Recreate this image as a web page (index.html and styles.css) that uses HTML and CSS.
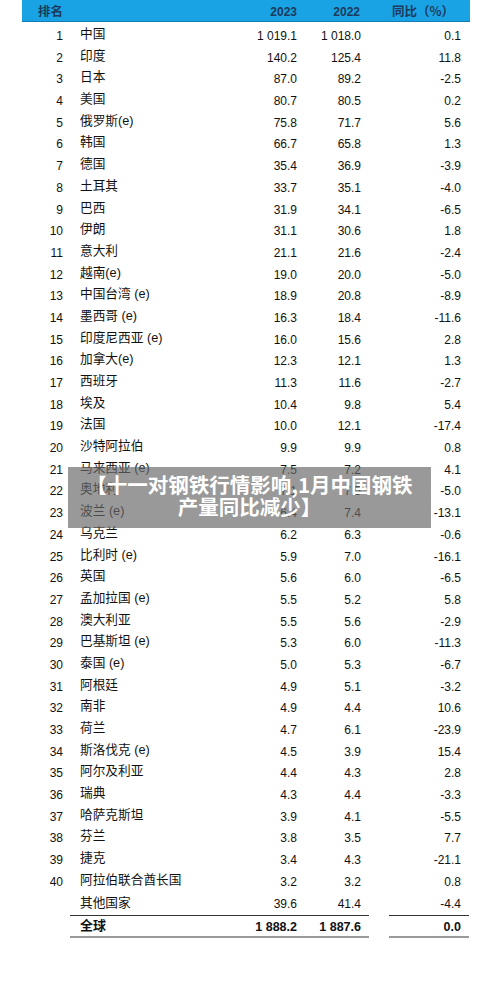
FILE: index.html
```html
<!DOCTYPE html>
<html lang="zh-CN">
<head>
<meta charset="utf-8">
<title>全球粗钢产量</title>
<link rel="stylesheet" href="styles.css">
</head>
<body>
<div class="page">
  <div class="head">
    <div class="h-rank">排名</div>
    <div></div>
    <div class="h-num">2023</div>
    <div class="h-num h-2022">2022</div>
    <div></div>
    <div class="h-pct">同比（%）</div>
  </div>
  <div class="rows">
    <div class="row"><div class="rank">1</div><div class="name">中国</div><div class="v23">1 019.1</div><div class="v22">1 018.0</div><div></div><div class="pct">0.1</div></div>
    <div class="row"><div class="rank">2</div><div class="name">印度</div><div class="v23">140.2</div><div class="v22">125.4</div><div></div><div class="pct">11.8</div></div>
    <div class="row"><div class="rank">3</div><div class="name">日本</div><div class="v23">87.0</div><div class="v22">89.2</div><div></div><div class="pct">-2.5</div></div>
    <div class="row"><div class="rank">4</div><div class="name">美国</div><div class="v23">80.7</div><div class="v22">80.5</div><div></div><div class="pct">0.2</div></div>
    <div class="row"><div class="rank">5</div><div class="name">俄罗斯(e)</div><div class="v23">75.8</div><div class="v22">71.7</div><div></div><div class="pct">5.6</div></div>
    <div class="row"><div class="rank">6</div><div class="name">韩国</div><div class="v23">66.7</div><div class="v22">65.8</div><div></div><div class="pct">1.3</div></div>
    <div class="row"><div class="rank">7</div><div class="name">德国</div><div class="v23">35.4</div><div class="v22">36.9</div><div></div><div class="pct">-3.9</div></div>
    <div class="row"><div class="rank">8</div><div class="name">土耳其</div><div class="v23">33.7</div><div class="v22">35.1</div><div></div><div class="pct">-4.0</div></div>
    <div class="row"><div class="rank">9</div><div class="name">巴西</div><div class="v23">31.9</div><div class="v22">34.1</div><div></div><div class="pct">-6.5</div></div>
    <div class="row"><div class="rank">10</div><div class="name">伊朗</div><div class="v23">31.1</div><div class="v22">30.6</div><div></div><div class="pct">1.8</div></div>
    <div class="row"><div class="rank">11</div><div class="name">意大利</div><div class="v23">21.1</div><div class="v22">21.6</div><div></div><div class="pct">-2.4</div></div>
    <div class="row"><div class="rank">12</div><div class="name">越南(e)</div><div class="v23">19.0</div><div class="v22">20.0</div><div></div><div class="pct">-5.0</div></div>
    <div class="row"><div class="rank">13</div><div class="name">中国台湾 (e)</div><div class="v23">18.9</div><div class="v22">20.8</div><div></div><div class="pct">-8.9</div></div>
    <div class="row"><div class="rank">14</div><div class="name">墨西哥 (e)</div><div class="v23">16.3</div><div class="v22">18.4</div><div></div><div class="pct">-11.6</div></div>
    <div class="row"><div class="rank">15</div><div class="name">印度尼西亚 (e)</div><div class="v23">16.0</div><div class="v22">15.6</div><div></div><div class="pct">2.8</div></div>
    <div class="row"><div class="rank">16</div><div class="name">加拿大(e)</div><div class="v23">12.3</div><div class="v22">12.1</div><div></div><div class="pct">1.3</div></div>
    <div class="row"><div class="rank">17</div><div class="name">西班牙</div><div class="v23">11.3</div><div class="v22">11.6</div><div></div><div class="pct">-2.7</div></div>
    <div class="row"><div class="rank">18</div><div class="name">埃及</div><div class="v23">10.4</div><div class="v22">9.8</div><div></div><div class="pct">5.4</div></div>
    <div class="row"><div class="rank">19</div><div class="name">法国</div><div class="v23">10.0</div><div class="v22">12.1</div><div></div><div class="pct">-17.4</div></div>
    <div class="row"><div class="rank">20</div><div class="name">沙特阿拉伯</div><div class="v23">9.9</div><div class="v22">9.9</div><div></div><div class="pct">0.8</div></div>
    <div class="row"><div class="rank">21</div><div class="name">马来西亚 (e)</div><div class="v23">7.5</div><div class="v22">7.2</div><div></div><div class="pct">4.1</div></div>
    <div class="row"><div class="rank">22</div><div class="name">奥地利</div><div class="v23">7.1</div><div class="v22">7.5</div><div></div><div class="pct">-5.0</div></div>
    <div class="row"><div class="rank">23</div><div class="name">波兰 (e)</div><div class="v23">6.4</div><div class="v22">7.4</div><div></div><div class="pct">-13.1</div></div>
    <div class="row"><div class="rank">24</div><div class="name">乌克兰</div><div class="v23">6.2</div><div class="v22">6.3</div><div></div><div class="pct">-0.6</div></div>
    <div class="row"><div class="rank">25</div><div class="name">比利时 (e)</div><div class="v23">5.9</div><div class="v22">7.0</div><div></div><div class="pct">-16.1</div></div>
    <div class="row"><div class="rank">26</div><div class="name">英国</div><div class="v23">5.6</div><div class="v22">6.0</div><div></div><div class="pct">-6.5</div></div>
    <div class="row"><div class="rank">27</div><div class="name">孟加拉国 (e)</div><div class="v23">5.5</div><div class="v22">5.2</div><div></div><div class="pct">5.8</div></div>
    <div class="row"><div class="rank">28</div><div class="name">澳大利亚</div><div class="v23">5.5</div><div class="v22">5.6</div><div></div><div class="pct">-2.9</div></div>
    <div class="row"><div class="rank">29</div><div class="name">巴基斯坦 (e)</div><div class="v23">5.3</div><div class="v22">6.0</div><div></div><div class="pct">-11.3</div></div>
    <div class="row"><div class="rank">30</div><div class="name">泰国 (e)</div><div class="v23">5.0</div><div class="v22">5.3</div><div></div><div class="pct">-6.7</div></div>
    <div class="row"><div class="rank">31</div><div class="name">阿根廷</div><div class="v23">4.9</div><div class="v22">5.1</div><div></div><div class="pct">-3.2</div></div>
    <div class="row"><div class="rank">32</div><div class="name">南非</div><div class="v23">4.9</div><div class="v22">4.4</div><div></div><div class="pct">10.6</div></div>
    <div class="row"><div class="rank">33</div><div class="name">荷兰</div><div class="v23">4.7</div><div class="v22">6.1</div><div></div><div class="pct">-23.9</div></div>
    <div class="row"><div class="rank">34</div><div class="name">斯洛伐克 (e)</div><div class="v23">4.5</div><div class="v22">3.9</div><div></div><div class="pct">15.4</div></div>
    <div class="row"><div class="rank">35</div><div class="name">阿尔及利亚</div><div class="v23">4.4</div><div class="v22">4.3</div><div></div><div class="pct">2.8</div></div>
    <div class="row"><div class="rank">36</div><div class="name">瑞典</div><div class="v23">4.3</div><div class="v22">4.4</div><div></div><div class="pct">-3.3</div></div>
    <div class="row"><div class="rank">37</div><div class="name">哈萨克斯坦</div><div class="v23">3.9</div><div class="v22">4.1</div><div></div><div class="pct">-5.5</div></div>
    <div class="row"><div class="rank">38</div><div class="name">芬兰</div><div class="v23">3.8</div><div class="v22">3.5</div><div></div><div class="pct">7.7</div></div>
    <div class="row"><div class="rank">39</div><div class="name">捷克</div><div class="v23">3.4</div><div class="v22">4.3</div><div></div><div class="pct">-21.1</div></div>
    <div class="row"><div class="rank">40</div><div class="name">阿拉伯联合酋长国</div><div class="v23">3.2</div><div class="v22">3.2</div><div></div><div class="pct">0.8</div></div>
    <div class="row row-other"><div class="rank"></div><div class="name">其他国家</div><div class="v23">39.6</div><div class="v22">41.4</div><div class="gap"></div><div class="pct">-4.4</div></div>
    <div class="row row-total"><div class="rank"></div><div class="name">全球</div><div class="v23">1 888.2</div><div class="v22">1 887.6</div><div class="gap"></div><div class="pct">0.0</div></div>
  </div>
  <div class="caption">【十一对钢铁行情影响,1月中国钢铁<br>产量同比减少】</div>
</div>
</body>
</html>
```

FILE: styles.css
```css
html, body {
  margin: 0;
  padding: 0;
  background: #ffffff;
}

.page {
  position: relative;
  width: 500px;
  height: 996px;
  font-family: "Liberation Sans", "Noto Sans CJK SC", sans-serif;
  font-size: 12px;
  color: #111111;
}

.head {
  display: grid;
  grid-template-columns: 48px 170px 65px 64px 20px 81px;
  margin-left: 22px;
  width: 448px;
  height: 21px;
  background: #19a3e4;
  border-bottom: 1px solid #137bb3;
  font-weight: bold;
  color: #1d3a5c;
  line-height: 21px;
}

.head > div {
  padding-top: 2px;
}

.h-rank {
  padding-left: 16px;
  white-space: nowrap;
  font-family: "Noto Sans CJK SC", sans-serif;
  font-size: 12.5px;
  line-height: 17px;
}

.h-num {
  text-align: right;
  padding-right: 8px;
}

.h-2022 {
  padding-right: 9px;
}

.h-pct {
  text-align: right;
  padding-right: 16px;
  white-space: nowrap;
  font-family: "Noto Sans CJK SC", sans-serif;
  font-size: 12.5px;
  line-height: 17px;
}

.rows {
  margin-top: 4px;
  margin-left: 22px;
}

.row {
  display: grid;
  grid-template-columns: 48px 170px 65px 64px 20px 80px;
  height: 21.7px;
  line-height: 21.7px;
}

.rank {
  text-align: right;
  padding-right: 7px;
}

.name {
  padding-left: 10px;
  white-space: nowrap;
  margin-top: -2px;
  font-size: 12.7px;
}

.v23, .v22, .pct {
  text-align: right;
  padding-right: 8px;
  white-space: nowrap;
}

.row-other .name,
.row-other .v23,
.row-other .v22,
.row-other .pct {
  border-bottom: 1px solid #333333;
}

.row-other .name {
  margin-top: 0;
  padding-bottom: 2px;
  line-height: 19.7px;
}

.row-total {
  height: 21px;
  line-height: 17px;
  font-weight: bold;
  font-size: 12.5px;
}

.row-total > div {
  padding-top: 4px;
}

.row-total .name,
.row-total .v23,
.row-total .v22,
.row-total .pct {
  border-bottom: 2px solid #9a9a9a;
}

.row-total .name {
  margin-top: 0;
  padding-top: 2px;
  height: 19px;
  font-size: 13px;
}

.caption {
  position: absolute;
  left: 68px;
  top: 467px;
  width: 363px;
  height: 55px;
  padding-top: 6px;
  background: rgba(105, 105, 105, 0.68);
  color: #ffffff;
  font-family: "Noto Sans CJK SC", sans-serif;
  font-weight: bold;
  font-size: 20.5px;
  line-height: 22px;
  text-align: center;
  white-space: nowrap;
}
```
